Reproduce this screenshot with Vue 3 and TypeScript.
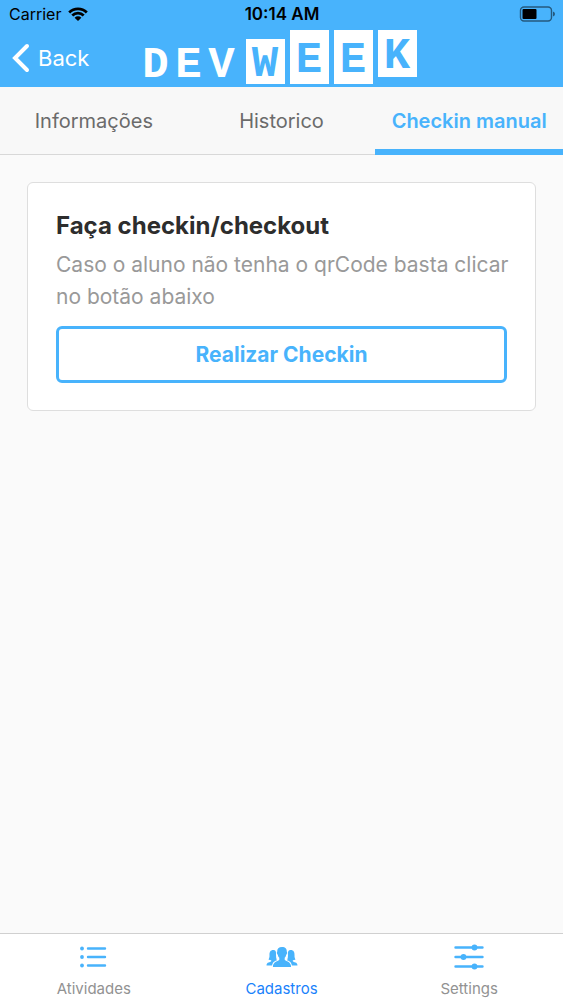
<script setup lang="ts">
import { ref } from 'vue'

const tabs: string[] = ['Informações', 'Historico', 'Checkin manual']
const activeTab = ref<string>('Checkin manual')

type Section = 'Atividades' | 'Cadastros' | 'Settings'
const sections: Section[] = ['Atividades', 'Cadastros', 'Settings']
const activeSection = ref<Section>('Cadastros')
</script>

<template>
  <div class="screen">
    <header class="header">
      <div class="status">
        <div class="carrier">
          <span>Carrier</span>
          <svg class="wifi" viewBox="0 0 20 15" aria-hidden="true">
            <path d="M1.2 5.4a12.6 12.6 0 0 1 17.6 0" />
            <path d="M4.3 8.5a8.2 8.2 0 0 1 11.4 0" />
            <path class="solid" d="M6.6 10.7a4.9 4.9 0 0 1 6.8 0L10 14z" />
          </svg>
        </div>
        <time class="clock">10:14 AM</time>
        <svg class="battery" viewBox="0 0 36 16" aria-hidden="true">
          <rect class="case" x="1.5" y="1" width="31" height="14" rx="3.5" />
          <rect x="3.5" y="3" width="14" height="10" rx="1" />
          <path class="cap" d="M34 5.5q2 .6 2 2.5t-2 2.5z" />
        </svg>
      </div>
      <div class="nav">
        <button class="back" type="button">
          <svg viewBox="0 0 18 30" aria-hidden="true"><path d="M15 3L3 15l12 12" /></svg>
          <span>Back</span>
        </button>
        <div class="logo" aria-label="DEVWEEK">
          <span class="letter">D</span>
          <span class="letter">E</span>
          <span class="letter">V</span>
          <span class="tile low">W</span>
          <span class="tile">E</span>
          <span class="tile">E</span>
          <span class="tile high">K</span>
        </div>
      </div>
    </header>

    <nav class="tabs">
      <button
        v-for="tab in tabs"
        :key="tab"
        type="button"
        class="tab"
        :class="{ active: tab === activeTab }"
        @click="activeTab = tab"
      >{{ tab }}</button>
    </nav>

    <main class="content">
      <section class="card">
        <h1>Faça checkin/checkout</h1>
        <p>Caso o aluno não tenha o qrCode basta clicar no botão abaixo</p>
        <button class="checkin" type="button">Realizar Checkin</button>
      </section>
    </main>

    <nav class="bottom">
      <button
        v-for="section in sections"
        :key="section"
        type="button"
        class="item"
        :class="{ active: section === activeSection }"
        @click="activeSection = section"
      >
        <svg v-if="section === 'Atividades'" viewBox="0 0 32 28" aria-hidden="true">
          <path class="line" d="M10 5.500h17M10 14h17M10 22.500h17" />
          <circle cx="4" cy="5.500" r="1.900" />
          <circle cx="4" cy="14" r="1.900" />
          <circle cx="4" cy="22.500" r="1.900" />
        </svg>
        <svg v-else-if="section === 'Cadastros'" viewBox="0 0 32 28" aria-hidden="true">
          <path d="M16 4c-3.300 0-5 2-4.800 4.800-.7.300-.2 2.600.6 3 .2 1.600 1 2.400 1.500 3v2c-.8 1.700-6.400 1.500-6.400 7.200h18.200c0-5.700-5.600-5.500-6.400-7.200v-2c.5-.6 1.300-1.400 1.500-3 .8-.4 1.300-2.700.6-3C21 6 19.300 4 16 4z" />
          <path d="M7.300 7C4.300 7 3.400 9.200 3.500 12c.1 2.500-.5 3.600-1 4.500.7.500 1.700.7 2.700.7v1C4.400 19.400.5 18.700.5 22.500h5.600c.6-3.700 3-4.500 5-5.200-.8-.4-.6-1-.5-1.400-.5-.7-.4-1.800-.6-3.900C10.200 9.200 10 7 7.300 7z" />
          <path d="M24.700 7c3 0 3.900 2.200 3.800 5-.1 2.500.5 3.600 1 4.500-.7.500-1.700.7-2.700.7v1c.8 1.200 4.700.5 4.700 4.300h-5.600c-.6-3.700-3-4.500-5-5.200.8-.4.600-1 .5-1.400.5-.7.400-1.800.6-3.900-.2-2.800 0-5 2.700-5z" />
        </svg>
        <svg v-else viewBox="0 0 32 28" aria-hidden="true">
          <path class="line" d="M2.500 4.500h27M2.500 14h27M2.500 23.500h27" />
          <circle cx="21.500" cy="4.500" r="2.900" />
          <circle cx="10.500" cy="14" r="2.900" />
          <circle cx="21.500" cy="23.500" r="2.900" />
        </svg>
        <span>{{ section }}</span>
      </button>
    </nav>
  </div>
</template>

<style>
body {
  margin: 0;
}
</style>

<style scoped>
.screen {
  --blue: #48b3fc;
  min-height: 100vh;
  display: flex;
  flex-direction: column;
  background: #fafafa;
  font-family: Inter, "Liberation Sans", sans-serif;
}
button {
  margin: 0;
  padding: 0;
  border: 0;
  background: none;
  font: inherit;
  cursor: pointer;
}
.header {
  background: var(--blue);
}
.status {
  height: 28px;
  padding: 0 8px 0 9px;
  display: grid;
  grid-template-columns: 1fr auto 1fr;
  align-items: center;
  font-size: 16px;
  color: #000;
}
.carrier {
  display: flex;
  align-items: center;
  gap: 7px;
}
.wifi {
  width: 20px;
  height: 15px;
  fill: none;
  stroke: #000;
  stroke-width: 2.8;
}
.wifi .solid {
  fill: #000;
  stroke: none;
}
.clock {
  font-size: 17px;
  font-weight: 600;
}
.battery {
  width: 36px;
  height: 16px;
  justify-self: end;
}
.battery .case {
  fill: none;
  stroke: #000;
  stroke-opacity: 0.5;
  stroke-width: 1.4;
}
.battery .cap {
  fill-opacity: 0.5;
}
.nav {
  height: 59px;
  padding: 0 12px;
  display: grid;
  grid-template-columns: 1fr auto 1fr;
}
.back {
  display: flex;
  align-items: center;
  gap: 8px;
  color: #fff;
  font-size: 22px;
}
.back svg {
  width: 18px;
  height: 30px;
  fill: none;
  stroke: #fff;
  stroke-width: 4;
  stroke-linecap: round;
}
.logo {
  display: flex;
  align-items: flex-end;
  padding-bottom: 3px;
  color: #fff;
  font-family: "Liberation Mono", monospace;
  font-size: 44px;
  line-height: 44px;
  font-weight: 700;
}
.letter,
.tile {
  box-sizing: border-box;
  padding-top: 5px;
  display: flex;
  align-items: center;
  justify-content: center;
}
.letter {
  width: 18px;
  height: 44px;
  margin-right: 15px;
}
.tile {
  width: 39px;
  height: 54px;
  margin-left: 5px;
  background: #fff;
  color: var(--blue);
}
.tile.low {
  height: 45px;
  margin-left: 0;
}
.tile.high {
  height: 47px;
  align-self: flex-start;
  margin-top: 2px;
}
.tabs {
  display: flex;
  height: 67px;
  background: #f8f8f8;
  border-bottom: 1px solid #d8d8d8;
}
.tab {
  flex: 1 1 0;
  margin-bottom: -1px;
  border-top: 5px solid transparent;
  border-bottom: 6px solid transparent;
  font-size: 20px;
  color: #6b6b6b;
  white-space: nowrap;
}
.tab.active {
  border-bottom-color: var(--blue);
  color: var(--blue);
  font-weight: 600;
}
.content {
  flex: 1;
  padding: 27px;
}
.card {
  padding: 27px 28px;
  border: 1px solid #dedede;
  border-radius: 6px;
  background: #fff;
}
h1 {
  margin: 0;
  font-size: 24px;
  line-height: 32px;
  font-weight: 700;
  color: #2d2d2d;
}
p {
  margin: 7px -8px 13px 0;
  font-size: 21px;
  line-height: 32px;
  color: #999;
}
.checkin {
  display: block;
  width: 100%;
  height: 57px;
  border: 3px solid var(--blue);
  border-radius: 6px;
  color: var(--blue);
  font-size: 21px;
  font-weight: 700;
}
.bottom {
  display: flex;
  height: 66px;
  border-top: 1px solid #d0d0d0;
  background: #fff;
}
.item {
  flex: 1 1 0;
  display: flex;
  flex-direction: column;
  align-items: center;
  padding-top: 9px;
  gap: 8px;
  color: #929292;
  font-size: 15px;
  line-height: 20px;
}
.item.active {
  color: #1a82fb;
}
.item svg {
  width: 32px;
  height: 28px;
  fill: var(--blue);
}
.item .line {
  fill: none;
  stroke: var(--blue);
  stroke-width: 2.4;
  stroke-linecap: round;
}
</style>
